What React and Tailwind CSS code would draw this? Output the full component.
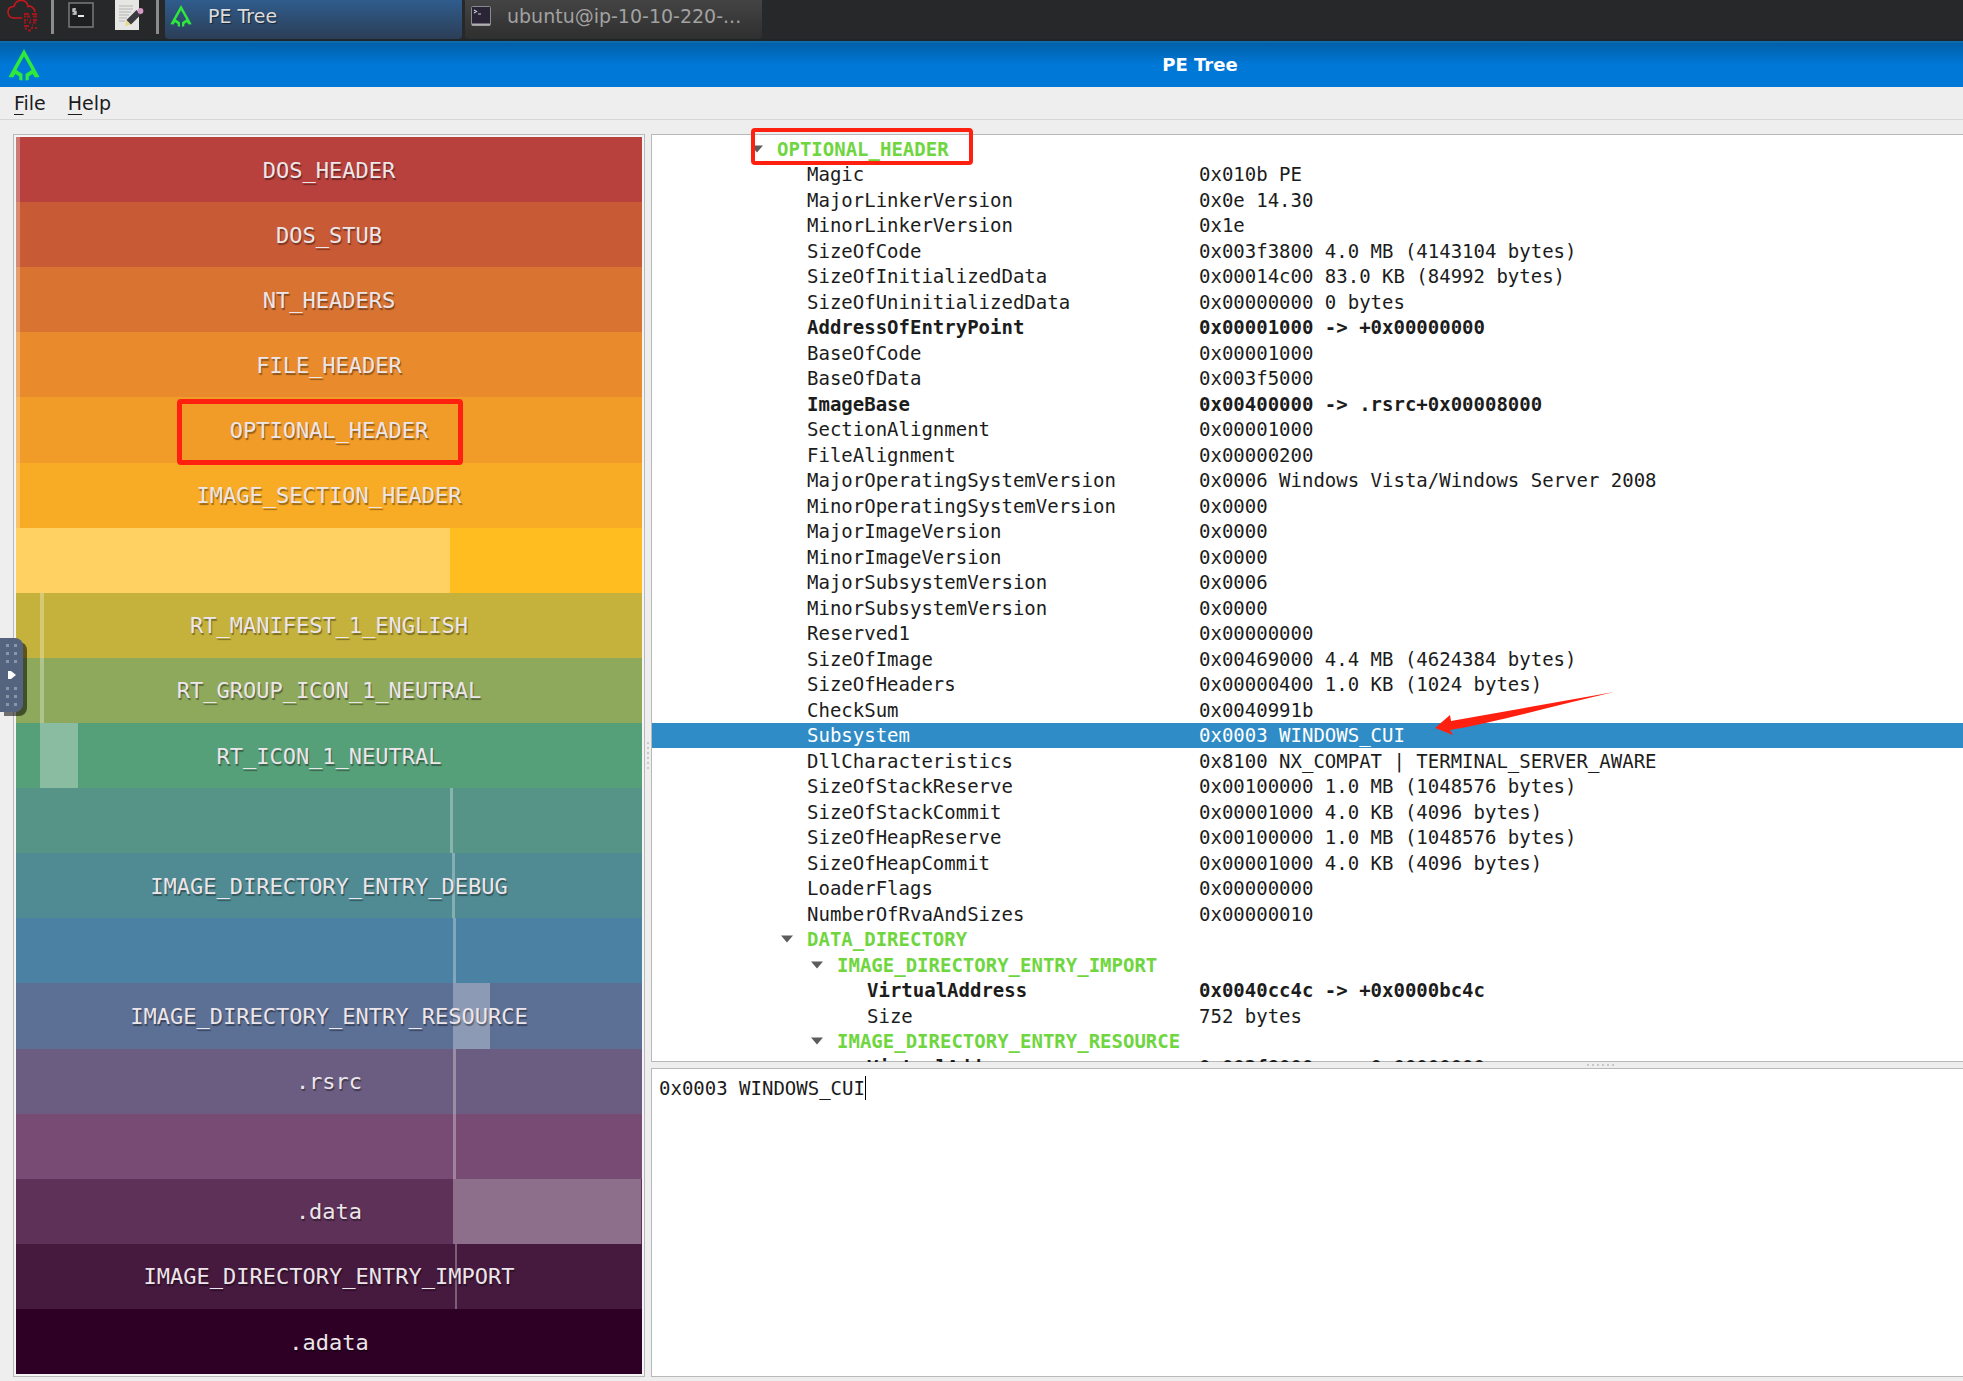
import clsx from 'clsx';

// Bands of the file map, top to bottom. start/size are percentages of the file.
const regions = [
  { name: 'DOS_HEADER', color: 'bg-[#b8413d]', start: 0, size: 0.6 },
  { name: 'DOS_STUB', color: 'bg-[#c95a36]', start: 0, size: 0.6 },
  { name: 'NT_HEADERS', color: 'bg-[#d87332]', start: 0, size: 0.6 },
  { name: 'FILE_HEADER', color: 'bg-[#e98b2d]', start: 0, size: 0.6 },
  { name: 'OPTIONAL_HEADER', color: 'bg-[#f19b29]', start: 0, size: 0.6, marked: true },
  { name: 'IMAGE_SECTION_HEADER', color: 'bg-[#f8ab24]', start: 0, size: 0.6 },
  { name: '', color: 'bg-[#ffbd20]', start: 0, size: 69.3 },
  { name: 'RT_MANIFEST_1_ENGLISH', color: 'bg-[#c5b23c]', start: 3.9, size: 0.5 },
  { name: 'RT_GROUP_ICON_1_NEUTRAL', color: 'bg-[#8ea95c]', start: 3.9, size: 0.5 },
  { name: 'RT_ICON_1_NEUTRAL', color: 'bg-[#56a079]', start: 3.9, size: 6 },
  { name: '', color: 'bg-[#559487]', start: 69.3, size: 0.5 },
  { name: 'IMAGE_DIRECTORY_ENTRY_DEBUG', color: 'bg-[#508b94]', start: 69.6, size: 0.5 },
  { name: '', color: 'bg-[#4b82a4]', start: 69.8, size: 0.5 },
  { name: 'IMAGE_DIRECTORY_ENTRY_RESOURCE', color: 'bg-[#5c6f95]', start: 69.8, size: 6 },
  { name: '.rsrc', color: 'bg-[#6a5d81]', start: 69.8, size: 0.5 },
  { name: '', color: 'bg-[#784b74]', start: 69.8, size: 0.5 },
  { name: '.data', color: 'bg-[#5e3159]', start: 69.8, size: 30 },
  { name: 'IMAGE_DIRECTORY_ENTRY_IMPORT', color: 'bg-[#46193f]', start: 70.1, size: 0.4 },
  { name: '.adata', color: 'bg-[#2e0026]', start: 0, size: 0 },
];

const rows = [
  { name: 'OPTIONAL_HEADER', depth: 0, group: true, marked: true },
  { name: 'Magic', value: '0x010b PE', depth: 1 },
  { name: 'MajorLinkerVersion', value: '0x0e 14.30', depth: 1 },
  { name: 'MinorLinkerVersion', value: '0x1e', depth: 1 },
  { name: 'SizeOfCode', value: '0x003f3800 4.0 MB (4143104 bytes)', depth: 1 },
  { name: 'SizeOfInitializedData', value: '0x00014c00 83.0 KB (84992 bytes)', depth: 1 },
  { name: 'SizeOfUninitializedData', value: '0x00000000 0 bytes', depth: 1 },
  { name: 'AddressOfEntryPoint', value: '0x00001000 -> +0x00000000', depth: 1, bold: true },
  { name: 'BaseOfCode', value: '0x00001000', depth: 1 },
  { name: 'BaseOfData', value: '0x003f5000', depth: 1 },
  { name: 'ImageBase', value: '0x00400000 -> .rsrc+0x00008000', depth: 1, bold: true },
  { name: 'SectionAlignment', value: '0x00001000', depth: 1 },
  { name: 'FileAlignment', value: '0x00000200', depth: 1 },
  { name: 'MajorOperatingSystemVersion', value: '0x0006 Windows Vista/Windows Server 2008', depth: 1 },
  { name: 'MinorOperatingSystemVersion', value: '0x0000', depth: 1 },
  { name: 'MajorImageVersion', value: '0x0000', depth: 1 },
  { name: 'MinorImageVersion', value: '0x0000', depth: 1 },
  { name: 'MajorSubsystemVersion', value: '0x0006', depth: 1 },
  { name: 'MinorSubsystemVersion', value: '0x0000', depth: 1 },
  { name: 'Reserved1', value: '0x00000000', depth: 1 },
  { name: 'SizeOfImage', value: '0x00469000 4.4 MB (4624384 bytes)', depth: 1 },
  { name: 'SizeOfHeaders', value: '0x00000400 1.0 KB (1024 bytes)', depth: 1 },
  { name: 'CheckSum', value: '0x0040991b', depth: 1 },
  { name: 'Subsystem', value: '0x0003 WINDOWS_CUI', depth: 1, selected: true },
  { name: 'DllCharacteristics', value: '0x8100 NX_COMPAT | TERMINAL_SERVER_AWARE', depth: 1 },
  { name: 'SizeOfStackReserve', value: '0x00100000 1.0 MB (1048576 bytes)', depth: 1 },
  { name: 'SizeOfStackCommit', value: '0x00001000 4.0 KB (4096 bytes)', depth: 1 },
  { name: 'SizeOfHeapReserve', value: '0x00100000 1.0 MB (1048576 bytes)', depth: 1 },
  { name: 'SizeOfHeapCommit', value: '0x00001000 4.0 KB (4096 bytes)', depth: 1 },
  { name: 'LoaderFlags', value: '0x00000000', depth: 1 },
  { name: 'NumberOfRvaAndSizes', value: '0x00000010', depth: 1 },
  { name: 'DATA_DIRECTORY', depth: 1, group: true },
  { name: 'IMAGE_DIRECTORY_ENTRY_IMPORT', depth: 2, group: true },
  { name: 'VirtualAddress', value: '0x0040cc4c -> +0x0000bc4c', depth: 3, bold: true },
  { name: 'Size', value: '752 bytes', depth: 3 },
  { name: 'IMAGE_DIRECTORY_ENTRY_RESOURCE', depth: 2, group: true },
  { name: 'VirtualAddress', value: '0x003f8000 -> +0x00000000', depth: 3, bold: true },
];

const indent = ['pl-[125px]', 'pl-[155px]', 'pl-[185px]', 'pl-[215px]'];

const TreeLogo = ({ className }) => (
  <svg className={className} viewBox="0 0 32 32" fill="#2ee83c">
    <path d="M16 0 L31.5 28 L27 28.500 L24.5 25 L20.8 27.5 V31 L17.5 31.500 V25 L23.500 21 L22 18 L16 7.500 L10 18 L8.500 21 L14.500 25 V31.500 L11.200 31 V27.500 L7.500 25 L5 28.500 L0.500 28 Z" />
  </svg>
);

const CloudLogo = () => (
  <svg className="w-8 h-8" viewBox="0 0 32 32" fill="none" stroke="#c8161d" strokeWidth="1.600">
    <path d="M15 18 H6.500 C2.500 18 1 14.500 1 12 C1 8.500 3.500 6.500 7 6.500 C8 2.500 10.500 0.500 14 0.500 C18 0.500 20.500 3 21 6.500 C22 6 24 6 25.500 7.500 C27.500 9 28 10.500 28 12" />
    <path
      d="M17 14 h5 M25 14 h5 M17 16.500 h2 M20 16.500 h3 M26 16.500 h4 M17 20 h2 M20 20 h1 M23 20 h1 M26 20 h4 M17 22.500 h2 M22 22.500 h2 M26 22.500 h3 M17 26 h5 M25 25.500 h1 M18 28.500 h2 M24 28 h2 M28 28 h2 M21 30.500 h3"
      stroke="#a3151a"
      strokeWidth="2"
    />
  </svg>
);

const TerminalIcon = () => (
  <svg className="w-7 h-7" viewBox="0 0 28 28">
    <rect x="2" y="3" width="24" height="24" fill="#1d1f20" stroke="#777b7c" strokeWidth="1.500" />
    <path d="M9 9 H6 V11.500 H9 V14 H5.500 M7.500 8 V15" fill="none" stroke="#bdbdbd" strokeWidth="1.500" />
    <path d="M11 16 H17" stroke="#e8e8e8" strokeWidth="2" />
  </svg>
);

const EditorIcon = () => (
  <svg className="w-8 h-8" viewBox="0 0 32 32">
    <rect x="2" y="0" width="24" height="30" fill="#e6e6e4" />
    <path d="M6 6 H20 M6 9 H20 M6 12 H18 M6 15 H16 M6 18 H14 M6 21 H12" stroke="#b4b4b4" strokeWidth="1.200" />
    <path d="M12 26 L13.500 20 L18 24.500 Z" fill="#e8d98a" />
    <path d="M13.500 20 L23.500 10 L28 14.500 L18 24.500 Z" fill="#3c3c40" />
    <circle cx="27.500" cy="11" r="2.900" fill="#d59ac6" />
  </svg>
);

const ShellIcon = () => (
  <svg className="w-5 h-5" viewBox="0 0 20 20">
    <rect x="0.500" y="0.500" width="19" height="19" rx="1" fill="#2a2437" stroke="#8b8b8b" />
    <path d="M1 18.500 H19" stroke="#b0b0b0" strokeWidth="2" />
    <path d="M3 4 L5.500 5.500 L3 7 M7 8 H10" fill="none" stroke="#d0d0d0" strokeWidth="1.200" />
  </svg>
);

const Taskbar = () => (
  <nav className="h-[41px] shrink-0 flex items-start bg-[#27282a] border-b-2 border-[#202528] text-[19px]">
    <button className="ml-[7px]" aria-label="Applications">
      <CloudLogo />
    </button>
    <span className="w-[3px] h-[34px] ml-3 bg-[#8c8c8c]" />
    <button className="ml-[13px]" aria-label="Terminal">
      <TerminalIcon />
    </button>
    <button className="ml-[18px]" aria-label="Text editor">
      <EditorIcon />
    </button>
    <span className="w-[3px] h-[34px] ml-[11px] bg-[#8c8c8c]" />
    <button className="w-[297px] h-[39px] ml-[6px] pl-[5px] pb-[7px] flex items-center rounded-b bg-linear-to-b from-[#2f5c8d] to-[#2b3e57] text-[#dcdcdc] text-shadow-[1px_1px_1px_#0008]">
      <TreeLogo className="w-[22px] h-[22px]" />
      <span className="ml-4">PE Tree</span>
    </button>
    <button className="w-[297px] h-[39px] ml-[3px] pl-[6px] pb-[7px] flex items-center rounded-b bg-linear-to-b from-[#444444] to-[#2f2f2f] text-[#a2a2a2]">
      <ShellIcon />
      <span className="ml-4">ubuntu@ip-10-10-220-...</span>
    </button>
  </nav>
);

const FileMap = () => (
  <section className="w-[632px] shrink-0 p-[2px] flex flex-col border border-[#b9b9b9] bg-[#f4f4f4] font-['DejaVu_Sans_Mono',monospace] text-[22px] text-[#ece6ea]">
    {regions.map((region, i) => (
      <button
        key={i}
        aria-label={region.name || 'Unnamed region'}
        className={clsx('relative flex-1 pt-[2px] flex items-center justify-center', region.color)}
      >
        <span
          className="absolute inset-y-0 bg-white/30"
          style={{ left: `${region.start}%`, width: `${region.size}%` }}
        />
        <span className="relative text-shadow-[1px_2px_1px_#0006]">{region.name}</span>
        {region.marked && (
          <span className="absolute z-10 top-[2px] -bottom-[2px] left-[161px] w-[286px] border-[5px] border-[#ff2010] rounded-[4px]" />
        )}
      </button>
    ))}
  </section>
);

const Row = ({ row }) => (
  <tr className={clsx(row.selected && 'bg-[#308cc6] text-white', (row.bold || row.group) && 'font-bold')}>
    <td className={clsx('p-0 w-[547px]', indent[row.depth])}>
      <span className="relative">
        {row.group && (
          <button className="absolute -left-[26px] inset-y-0 flex items-center" aria-label="Collapse">
            <svg className="w-3 h-2" viewBox="0 0 12 8">
              <path d="M0 0.500 H12 L6 7.500 Z" fill="#5c5c5c" />
            </svg>
          </button>
        )}
        <span className={clsx(row.group && 'text-[#6fd63f]')}>{row.name}</span>
        {row.marked && (
          <span className="absolute -top-[10px] -bottom-[5px] -left-[26px] -right-[24px] border-4 border-[#ff2010] rounded-[4px]" />
        )}
      </span>
    </td>
    <td className="p-0">
      <span className="relative">
        {row.value}
        {row.selected && (
          <svg className="absolute left-full -top-[35px] ml-7 w-[182px] h-[46px]" viewBox="0 0 182 46">
            <path d="M181 3 L18 32 L17 26 L2 39 L20 46 L17 41 C60 34 120 17 181 3 Z" fill="#ff2010" />
          </svg>
        )}
      </span>
    </td>
  </tr>
);

const Grip = ({ className }) => (
  <div className={clsx('flex items-center justify-center gap-[3px] shrink-0', className)}>
    {[0, 1, 2, 3, 4, 5].map((i) => (
      <span key={i} className="size-[2px] bg-[#c8c8c8]" />
    ))}
  </div>
);

const Dots = () => (
  <span className="grid grid-cols-2 gap-x-[5px] gap-y-[5px]">
    {[0, 1, 2, 3, 4, 5].map((i) => (
      <span key={i} className="size-[3px] bg-[#8a97ab]" />
    ))}
  </span>
);

export default function App() {
  return (
    <div className="relative min-h-screen flex flex-col overflow-hidden bg-[#eeeeee] font-['DejaVu_Sans',sans-serif] text-[19px] leading-6 text-[#1c1c1c]">
      <Taskbar />
      <header className="h-[46px] shrink-0 flex items-center bg-linear-to-b from-[#0060a8] to-[#0078d8] to-50% border-t-2 border-[#0c6caf]">
        <TreeLogo className="w-8 h-8 ml-2" />
        <h1 className="flex-1 ml-[397px] text-center text-[18px] font-bold text-white">PE Tree</h1>
      </header>
      <nav className="h-[33px] shrink-0 flex items-center gap-[22px] px-[14px] border-b border-[#d6d6d6]">
        <button><u className="underline-offset-4">F</u>ile</button>
        <button><u className="underline-offset-4">H</u>elp</button>
      </nav>
      <main className="flex-1 flex pt-[14px] pb-[4px] pl-[13px]">
        <FileMap />
        <Grip className="w-[6px] flex-col" />
        <div className="flex-1 min-w-0 flex flex-col font-['DejaVu_Sans_Mono',monospace]">
          <section className="h-[928px] pt-px border border-r-0 border-[#b9b9b9] bg-white [clip-path:inset(-12px_0_0_0)]">
            <table className="w-full h-[944px] border-collapse table-fixed">
              <tbody>
                {rows.map((row, i) => (
                  <Row key={i} row={row} />
                ))}
              </tbody>
            </table>
          </section>
          <Grip className="h-[6px] pl-[586px]" />
          <div className="relative flex-1 flex">
            <textarea
              aria-label="Value"
              className="flex-1 p-[7px] resize-none outline-none border border-r-0 border-[#b9b9b9] bg-white"
              defaultValue="0x0003 WINDOWS_CUI"
            />
            <span className="absolute top-2 left-[calc(18ch+8px)] w-px h-6 bg-black" />
          </div>
        </div>
      </main>
      {/* Slide-out handle of the remote desktop panel */}
      <button
        aria-label="Open panel"
        className="absolute left-0 top-[638px] w-[23px] h-[74px] flex flex-col items-center justify-center gap-2 rounded-r-lg bg-[#54647e] shadow-[4px_4px_0_#0008]"
      >
        <Dots />
        <svg className="w-2 h-2" viewBox="0 0 8 8">
          <path d="M0 0 H3 L8 4 L3 8 H0 Z" fill="#fff" />
        </svg>
        <Dots />
      </button>
    </div>
  );
}
